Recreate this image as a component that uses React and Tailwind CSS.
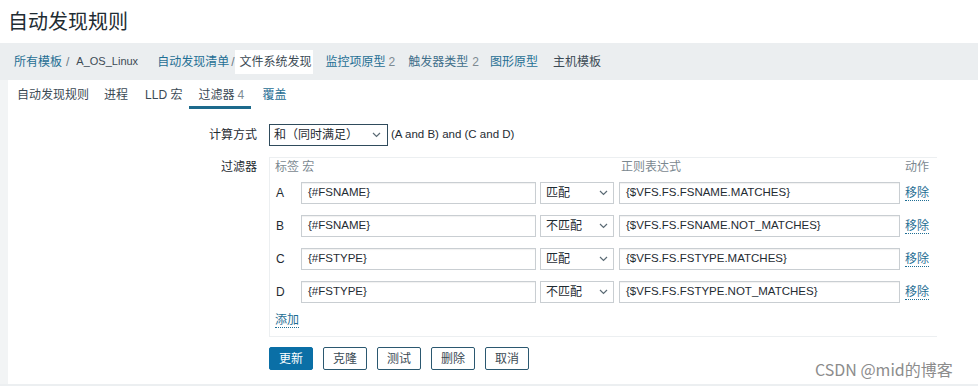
import React from "react";

const FONT = "font-['Liberation_Sans','Noto_Sans_CJK_SC',sans-serif]";

function Chevron({ className = "" }) {
  return (
    <svg className={className} width="9" height="6" viewBox="0 0 9 6" fill="none">
      <polyline points="1,1 4.5,4.5 8,1" stroke="#5b6b75" strokeWidth="1.2" />
    </svg>
  );
}

function Input({ value, w }) {
  return (
    <div
      className={`h-[22px] ${w} border border-[#c9ced2] bg-white flex items-center pl-[6px] text-[11.5px] text-[#1f2c33] shadow-[inset_0_1px_1px_rgba(0,0,0,0.06)]`}
    >
      {value}
    </div>
  );
}

function Select({ value }) {
  return (
    <div className="h-[22px] w-[74px] border border-[#c9ced2] bg-white flex items-center justify-between pl-[5px] pr-[5px] text-[12px] text-[#1f2c33]">
      <span>{value}</span>
      <Chevron />
    </div>
  );
}

const rows = [
  ["A", "{#FSNAME}", "匹配", "{$VFS.FS.FSNAME.MATCHES}"],
  ["B", "{#FSNAME}", "不匹配", "{$VFS.FS.FSNAME.NOT_MATCHES}"],
  ["C", "{#FSTYPE}", "匹配", "{$VFS.FS.FSTYPE.MATCHES}"],
  ["D", "{#FSTYPE}", "不匹配", "{$VFS.FS.FSTYPE.NOT_MATCHES}"],
];

export default function App() {
  const link = "text-[#1f6e94]";
  return (
    <div className={`relative w-[978px] h-[386px] overflow-hidden bg-white text-[12px] text-[#1f2c33] ${FONT}`}>
      {/* Title */}
      <div className="h-[43px] flex items-center pl-[8px] text-[20px] text-[#1f2c33] leading-none">
        自动发现规则
      </div>

      {/* Breadcrumb bar */}
      <div className="h-[37px] bg-[#ebeef0] flex items-center whitespace-nowrap">
        <span className={`ml-[14px] ${link}`}>所有模板</span>
        <span className="ml-[4px] text-[#6b7a84]">/</span>
        <span className="ml-[7px] text-[11px] text-[#3b4a54]">A_OS_Linux</span>
        <span className={`ml-[19px] ${link}`}>自动发现清单</span>
        <span className="ml-[2px] text-[#6b7a84]">/</span>
        <span className="ml-[1px] h-[24px] w-[78px] bg-white flex items-center pl-[4px] text-[#3b4a54]">文件系统发现</span>
        <span className={`ml-[12px] ${link}`}>监控项原型</span>
        <span className="ml-[3px] text-[#7d8a92]">2</span>
        <span className="ml-[13px] text-[#3f6f8a]">触发器类型</span>
        <span className="ml-[4px] text-[#7d8a92]">2</span>
        <span className={`ml-[11px] ${link}`}>图形原型</span>
        <span className="ml-[15px] text-[#3b4a54]">主机模板</span>
      </div>

      {/* Tabs */}
      <div className="h-[29px] flex items-stretch whitespace-nowrap text-[#3b4a54]">
        <span className="ml-[17px] flex items-center">自动发现规则</span>
        <span className="ml-[15px] flex items-center">进程</span>
        <span className="ml-[17px] flex items-center">LLD 宏</span>
        <span className="ml-[7px] w-[62px] pl-[9px] flex items-center border-b-[3px] border-[#1c6a8c] pt-[3px]">
          过滤器<span className="ml-[3px] text-[#7d8a92]">4</span>
        </span>
        <span className={`ml-[11px] flex items-center ${link}`}>覆盖</span>
      </div>

      {/* Form */}
      <div className="flex flex-col">
        <div className="mt-[15px] flex items-center">
          <div className="w-[257px] text-right">计算方式</div>
          <div className="ml-[12px] h-[22px] w-[119px] border border-[#2f4b5c] bg-white flex items-center justify-between pl-[4px] pr-[6px]">
            <span>和（同时满足）</span>
            <Chevron />
          </div>
          <span className="ml-[3px] text-[11.5px]">(A and B) and (C and D)</span>
        </div>

        <div className="mt-[11px] flex items-start">
          <div className="w-[257px] text-right leading-[16px] pt-[2px]">过滤器</div>
          <div className="ml-[12px] w-[668px] border-t border-l border-b border-[#eceff1] pl-[5px] pt-[1px] pb-[8px]">
            <div className="flex h-[16px] items-center text-[#7b8890]">
              <span className="w-[344px]">标签 宏</span>
              <span className="ml-[2px] w-[284px]">正则表达式</span>
              <span>动作</span>
            </div>
            <div className="mt-[7px] flex flex-col gap-[11px]">
              {rows.map(([k, m, op, re]) => (
                <div key={k} className="flex items-center">
                  <span className="w-[26px] pl-[1px] text-[12px]">{k}</span>
                  <Input value={m} w="w-[235px]" />
                  <div className="ml-[4px]">
                    <Select value={op} />
                  </div>
                  <div className="ml-[5px]">
                    <Input value={re} w="w-[281px]" />
                  </div>
                  <span className={`ml-[5px] ${link} border-b border-dotted border-[#1f6e94] leading-[14px]`}>
                    移除
                  </span>
                </div>
              ))}
            </div>
            <div className="mt-[10px] flex">
              <span className={`${link} border-b border-dotted border-[#1f6e94] leading-[14px]`}>添加</span>
            </div>
          </div>
        </div>

        <div className="mt-[10px] ml-[269px] flex gap-[10px]">
          <button className="h-[23px] w-[44px] bg-[#0a6fa6] border border-[#0a6fa6] text-white rounded-[2px] text-[12px]">
            更新
          </button>
          {["克隆", "测试", "删除", "取消"].map((t) => (
            <button
              key={t}
              className="h-[23px] w-[44px] bg-white border border-[#2b5870] text-[#3b4a54] rounded-[2px] text-[12px]"
            >
              {t}
            </button>
          ))}
        </div>
      </div>

      {/* left and bottom page edge */}
      <div className="absolute left-0 top-[80px] bottom-0 w-[8px] bg-[#f2f4f5]" />
      <div className="absolute left-0 right-0 bottom-0 h-[2px] bg-[#eceff1]" />

      {/* watermark */}
      <div className="absolute left-[815px] top-[357px] text-[16px] text-[#8c8c8c] whitespace-nowrap font-['Noto_Sans_CJK_SC','Liberation_Sans',sans-serif]">
        CSDN @mid的博客
      </div>
    </div>
  );
}
